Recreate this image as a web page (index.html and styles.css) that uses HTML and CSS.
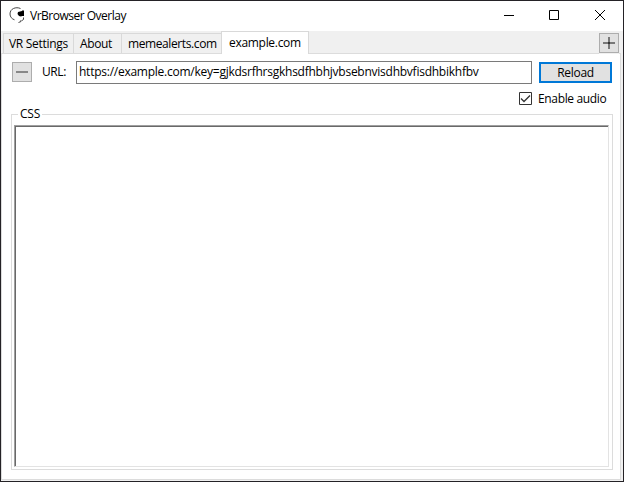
FILE: index.html
```html
<!DOCTYPE html>
<html lang="en">
<head>
<meta charset="utf-8">
<title>VrBrowser Overlay</title>
<link rel="stylesheet" href="styles.css">
</head>
<body>
<div class="window">
  <header class="titlebar">
    <svg class="app-icon" width="17" height="17" viewBox="0 0 17 17"><path d="M11.500 1.500C7-.5 1 1.500 1 7c0 3 2 5 4.500 5.800M14.500 10.500v2l-1.500 1M12 13v1.500l-2.500 1" fill="none" stroke="#444"/><path d="M9 5l4-1 1-1 1 1v5h-2l-1 .5-2-.5-1.500-2z"/></svg>
    <span class="title">VrBrowser Overlay</span>
    <svg class="controls" width="112" height="30" viewBox="0 0 112 30" fill="none" stroke="#000"><path d="M3 14.500h10M48.500 9.500h9v9h-9zM94 9l10 10M104 9l-10 10"/></svg>
  </header>
  <nav class="tabs">
    <div class="tab settings"><span>VR Settings</span></div>
    <div class="tab about"><span>About</span></div>
    <div class="tab meme"><span>memealerts.com</span></div>
    <div class="tab active"><span>example.com</span></div>
    <button class="square add"><svg width="18" height="18" viewBox="0 0 18 18"><path d="M3 9h12M9 3v12" stroke="#777" stroke-width="2" fill="none"/><path d="M8 8h2v2H8z" fill="#333"/></svg></button>
  </nav>
  <main class="page">
    <div class="address">
      <button class="square"><svg width="18" height="18" viewBox="0 0 18 18"><path d="M3 9h12" stroke="#888" stroke-width="2"/></svg></button>
      <span class="url-label">URL:</span>
      <div class="url"><span>https://example.com/key=gjkdsrfhrsgkhsdfhbhjvbsebnvisdhbvfisdhbikhfbv</span></div>
      <button class="reload"><span>Reload</span></button>
    </div>
    <label class="audio">
      <svg width="13" height="13" viewBox="0 0 13 13" fill="none" stroke="#333"><path d="M.5.5h12v12H.5z"/><path d="M2 6.500l3 3 6-6" stroke-width="1.300"/></svg>
      <span>Enable audio</span>
    </label>
    <fieldset class="group"><legend><span>CSS</span></legend><div class="editor"></div></fieldset>
  </main>
</div>
</body>
</html>
```

FILE: styles.css
```css
* { box-sizing: border-box; }
body { margin: 0; background: #f0f0f0; font: 12px/16px "Open Sans", "Noto Sans", sans-serif; color: #000; }
span { white-space: nowrap; }
button { padding: 0; font: inherit; color: inherit; border-radius: 0; }
svg { display: block; flex: none; }
.window { width: 624px; height: 482px; border: 1px solid #242226; background: #f0f0f0; display: flex; flex-direction: column; }
.titlebar { height: 30px; flex: none; background: #fff; display: flex; }
.app-icon { margin: 6px 0 0 8px; }
.title { margin: 7px 0 0 4px; letter-spacing: -.5px; }
.controls { margin-left: auto; margin-right: 10px; }
.tabs { height: 22px; flex: none; display: flex; align-items: flex-end; padding-left: 2px; }
.tab { height: 20px; border: 1px solid #d9d9d9; border-width: 1px 1px 0 0; padding: 2px 0 0 6px; letter-spacing: -.4px; }
.settings { width: 71px; border-left-width: 1px; padding-left: 5px; }
.settings span { letter-spacing: -.3px; }
.about { width: 48px; }
.meme { width: 99px; border-right: 0; }
.active { width: 88px; height: 23px; margin-bottom: -1px; padding: 3px 0 0 7px; background: #fff; border-left-width: 1px; position: relative; letter-spacing: -.3px; }
.square { width: 20px; height: 20px; border: 1px solid #adadad; background: #e1e1e1; flex: none; }
.add { margin-left: auto; margin-right: 4px; position: relative; box-shadow: 0 1px #f0f0f0; }
.page { height: 427px; margin-right: 2px; background: #fff; border: 1px solid #dcdcdc; padding: 7px 7px 9px 9px; display: flex; flex-direction: column; }
.address { height: 23px; flex: none; display: flex; align-items: flex-start; }
.address .square { margin: 1px 10px 0 1px; }
.url-label { width: 34px; margin-top: 3px; letter-spacing: -.4px; }
.url { width: 456px; height: 23px; border: 1px solid #7a7a7a; padding: 2px 0 0 2px; letter-spacing: -.25px; }
.reload { width: 73px; height: 21px; margin: 1px 0 0 7px; border: 2px solid #0078d7; background: #e1e1e1; line-height: 17px; letter-spacing: -.3px; }
.audio { height: 13px; flex: none; margin: 8px 6px 0 auto; display: flex; line-height: 14px; width: 88px; gap: 6px; letter-spacing: -.35px; }
.group { height: 364px; flex: none; min-width: 0; border: 1px solid #dcdcdc; margin: 1px 0 0; padding: 3px 2px 2px; }
.group legend { height: 16px; padding: 0 2px; margin-left: 4px; letter-spacing: -.2px; }
.editor { width: 595px; height: 342px; background: #fff; border: 1px solid #a0a0a0; border-right-color: #e3e3e3; border-bottom-color: #e3e3e3; box-shadow: inset 1px 1px #696969; }
```
